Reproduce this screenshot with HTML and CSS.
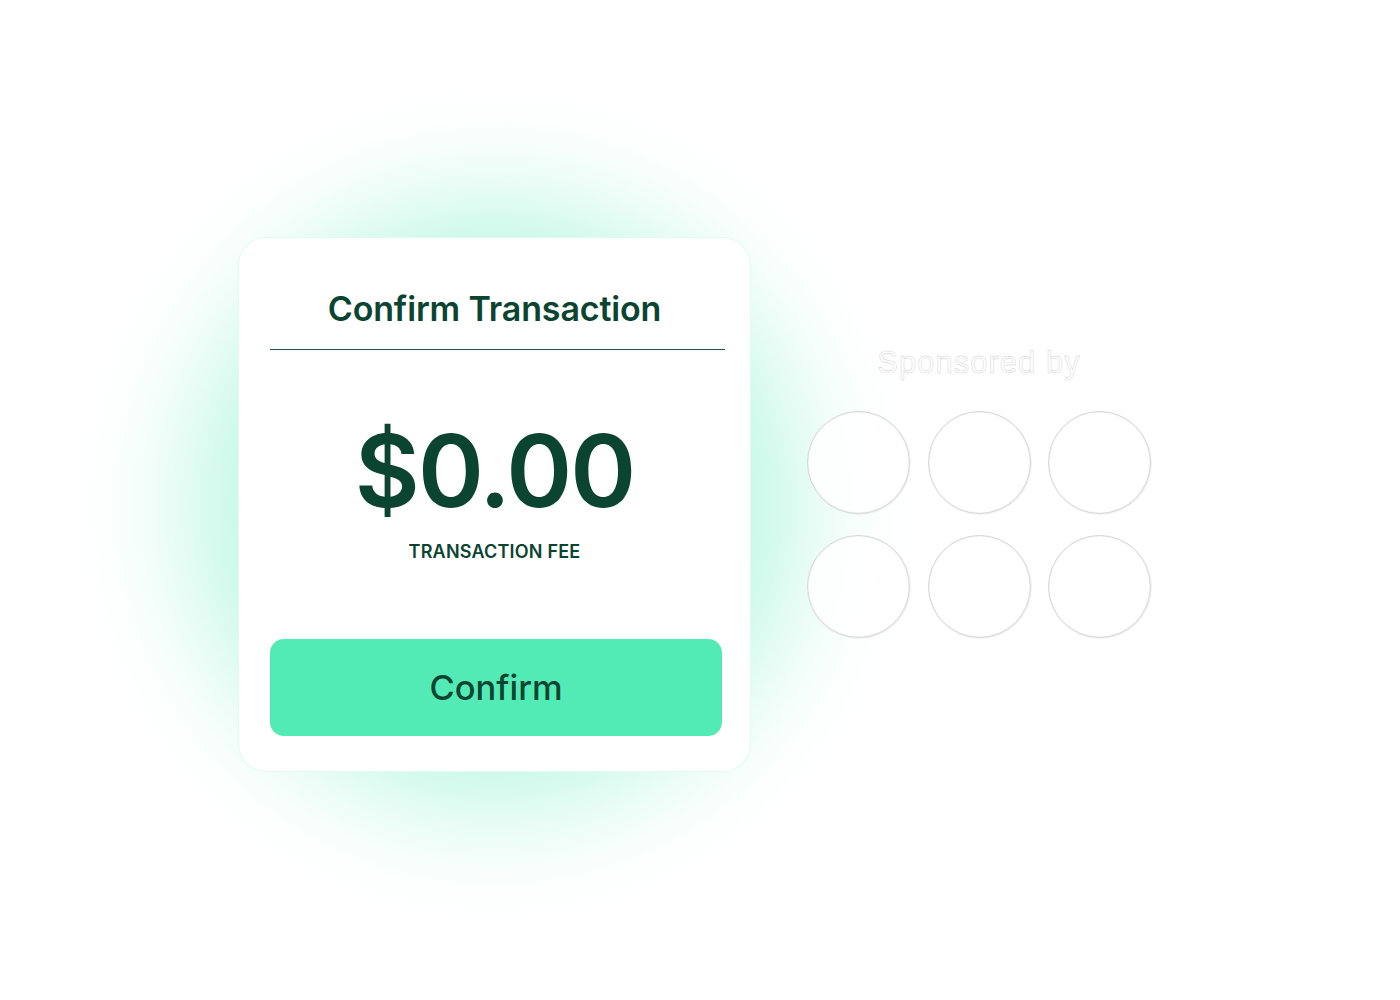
FILE: index.html
```html
<!DOCTYPE html>
<html lang="en">
<head>
<meta charset="utf-8">
<title>Confirm Transaction</title>
<link rel="stylesheet" href="styles.css">
</head>
<body>
<main class="stage">
  <section class="card">
    <h1 class="card-title">Confirm Transaction</h1>
    <hr class="divider">
    <div class="amount">$0.00</div>
    <div class="amount-label">TRANSACTION FEE</div>
    <button class="confirm-btn" type="button">Confirm</button>
  </section>
  <section class="sponsors">
    <h2 class="sponsors-title">Sponsored by</h2>
    <div class="sponsor-grid">
      <div class="sponsor"></div>
      <div class="sponsor"></div>
      <div class="sponsor"></div>
      <div class="sponsor"></div>
      <div class="sponsor"></div>
      <div class="sponsor"></div>
    </div>
  </section>
</main>
</body>
</html>
```

FILE: styles.css
```css
* { box-sizing: border-box; }
html, body {
  margin: 0;
  padding: 0;
  background: #ffffff;
}
body {
  font-family: Inter, "Noto Sans", sans-serif;
  color: #0b4430;
}
.stage {
  position: relative;
  z-index: 0;
  width: 1400px;
  height: 1000px;
  display: flex;
  align-items: flex-start;
  padding: 237px 0 0 238px;
  gap: 56px;
  overflow: hidden;
}
.card {
  position: relative;
  width: 513px;
  height: 535px;
  flex: none;
  background: #ffffff;
  border-radius: 28px;
  border: 1px solid rgba(82, 235, 182, 0.18);
  padding: 51px 31px 0 31px;
  display: flex;
  flex-direction: column;
  align-items: stretch;
}
.card::before {
  content: "";
  position: absolute;
  left: 50%;
  top: 50%;
  width: 840px;
  height: 840px;
  transform: translate(-50%, -50%);
  z-index: -1;
  pointer-events: none;
  background: radial-gradient(circle closest-side,
    rgba(82, 235, 182, 0.30) 0,
    rgba(82, 235, 182, 0.30) 250px,
    rgba(82, 235, 182, 0.27) 270px,
    rgba(82, 235, 182, 0.19) 300px,
    rgba(82, 235, 182, 0.11) 330px,
    rgba(82, 235, 182, 0.05) 360px,
    rgba(82, 235, 182, 0.015) 390px,
    rgba(82, 235, 182, 0) 420px);
}
.card-title {
  margin: 0;
  font-size: 34px;
  line-height: 40px;
  font-weight: 600;
  text-align: center;
  letter-spacing: -0.15px;
}
.divider {
  margin: 20px 0 0 0;
  border: 0;
  height: 1px;
  background: #1f5240;
  width: 455px;
}
.amount {
  margin-top: 71px;
  font-size: 100px;
  line-height: 100px;
  font-weight: 600;
  text-align: center;
  letter-spacing: -2px;
}
.amount-label {
  margin-top: 20px;
  font-size: 18px;
  line-height: 22px;
  font-weight: 600;
  text-align: center;
  letter-spacing: 0.2px;
}
.confirm-btn {
  margin-top: 76px;
  width: 452px;
  height: 97px;
  border: 0;
  border-radius: 14px;
  background: #52ebb6;
  color: #0b4430;
  font-family: Inter, "Noto Sans", sans-serif;
  font-size: 34.5px;
  font-weight: 500;
  padding: 0;
}
.sponsors {
  padding-top: 108px;
  width: 344px;
  display: flex;
  flex-direction: column;
  align-items: center;
}
.sponsors-title {
  margin: 0;
  font-family: "Liberation Sans", Arial, sans-serif;
  font-size: 31px;
  line-height: 36px;
  font-weight: 400;
  letter-spacing: 1px;
  color: #ffffff;
  -webkit-text-stroke: 0.45px #cfcfcf;
}
.sponsor-grid {
  margin-top: 30px;
  display: grid;
  grid-template-columns: repeat(3, 103px);
  column-gap: 17.5px;
  row-gap: 21px;
}
.sponsor {
  width: 103px;
  height: 103px;
  border-radius: 50%;
  background: rgba(255, 255, 255, 0.82);
  border: 1px solid #d5d5d5;
  box-shadow: inset 0 0 0 1px #f8f8f8, 0.5px 0.5px 1px rgba(0, 0, 0, 0.1);
}
```
